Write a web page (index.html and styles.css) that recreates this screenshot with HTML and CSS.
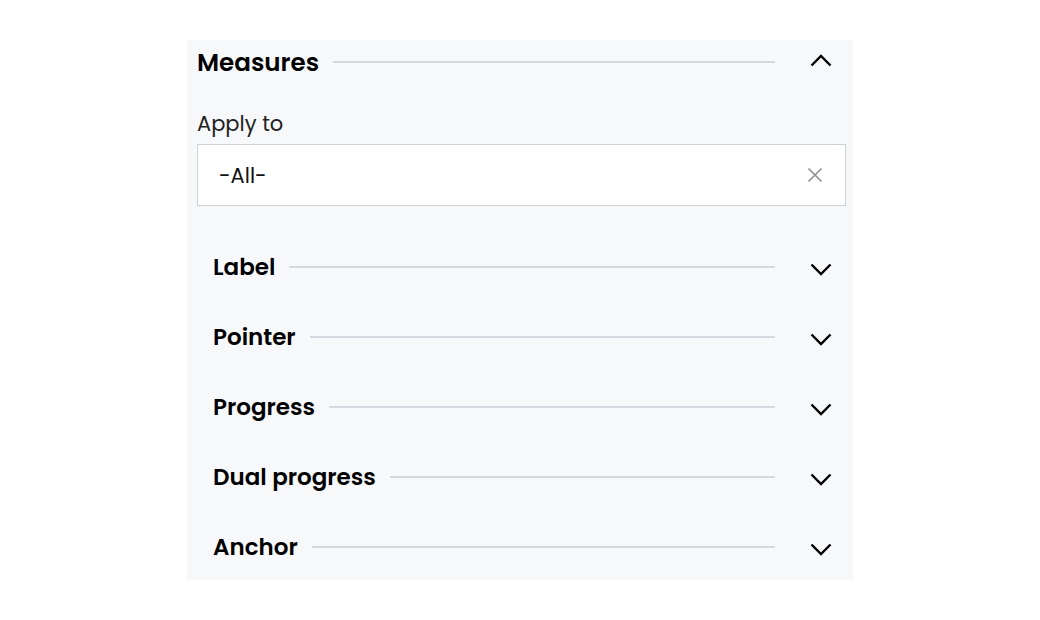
FILE: index.html
```html
<!DOCTYPE html>
<html>
<head>
<meta charset="utf-8">
<link rel="stylesheet" href="styles.css">
</head>
<body>
<div class="panel">
  <div class="head">
    <span class="title">Measures</span>
    <span class="rule"></span>
    <svg class="chev up" width="22" height="13" viewBox="0 0 22 13"><path d="M1.5 11.5 L11 2 L20.5 11.5" fill="none" stroke="#000" stroke-width="2.4"/></svg>
  </div>
  <div class="apply">
    <div class="lbl">Apply to</div>
    <div class="input">
      <span class="val">-All-</span>
      <svg class="clear" width="16" height="16" viewBox="0 0 16 16"><path d="M1.5 1.5 L14.5 14.5 M14.5 1.5 L1.5 14.5" fill="none" stroke="#8d9199" stroke-width="1.7"/></svg>
    </div>
  </div>
  <div class="sec"><span class="stitle">Label</span><span class="rule"></span><svg class="chev down" width="22" height="13" viewBox="0 0 22 13"><path d="M1.5 1.5 L11 11 L20.5 1.5" fill="none" stroke="#000" stroke-width="2.4"/></svg></div>
  <div class="sec"><span class="stitle">Pointer</span><span class="rule"></span><svg class="chev down" width="22" height="13" viewBox="0 0 22 13"><path d="M1.5 1.5 L11 11 L20.5 1.5" fill="none" stroke="#000" stroke-width="2.4"/></svg></div>
  <div class="sec"><span class="stitle">Progress</span><span class="rule"></span><svg class="chev down" width="22" height="13" viewBox="0 0 22 13"><path d="M1.5 1.5 L11 11 L20.5 1.5" fill="none" stroke="#000" stroke-width="2.4"/></svg></div>
  <div class="sec"><span class="stitle">Dual progress</span><span class="rule"></span><svg class="chev down" width="22" height="13" viewBox="0 0 22 13"><path d="M1.5 1.5 L11 11 L20.5 1.5" fill="none" stroke="#000" stroke-width="2.4"/></svg></div>
  <div class="sec"><span class="stitle">Anchor</span><span class="rule"></span><svg class="chev down" width="22" height="13" viewBox="0 0 22 13"><path d="M1.5 1.5 L11 11 L20.5 1.5" fill="none" stroke="#000" stroke-width="2.4"/></svg></div>
</div>
</body>
</html>
```
FILE: styles.css
```css
html, body {
  margin: 0;
  padding: 0;
  background: #fff;
}
body {
  font-family: "Poppins", "Inter", "Liberation Sans", sans-serif;
  color: #000;
}
.panel {
  margin: 40px 0 0 187px;
  width: 666px;
  height: 540px;
  background: #f7f8fa;
  overflow: hidden;
  box-sizing: border-box;
}
.head {
  display: flex;
  align-items: center;
  height: 44px;
  padding: 0 21px 0 10px;
}
.title {
  font-size: 24.6px;
  font-weight: 600;
}
.rule {
  flex: 1;
  height: 1.5px;
  background: #d4d7dd;
  margin: 0 35px 0 14px;
}
.chev { display: block; flex: none; }
.chev.up { margin-top: -4px; }
.chev.down { margin-top: 4px; }
.apply {
  padding: 0 7px 0 10px;
}
.lbl {
  margin-top: 28px;
  font-size: 21px;
  line-height: 24px;
  color: #222;
}
.input {
  margin-top: 8px;
  height: 62px;
  box-sizing: border-box;
  border: 1.5px solid #cdd1d8;
  background: #fff;
  display: flex;
  align-items: center;
  padding: 0 22px 0 21px;
}
.val {
  flex: 1;
  font-size: 21px;
  color: #111;
}
.clear { display: block; }
.sec {
  display: flex;
  align-items: center;
  height: 70px;
  padding: 0 21px 0 26px;
}
.apply + .sec { margin-top: 26px; }
.stitle {
  font-size: 23px;
  font-weight: 600;
}
```
